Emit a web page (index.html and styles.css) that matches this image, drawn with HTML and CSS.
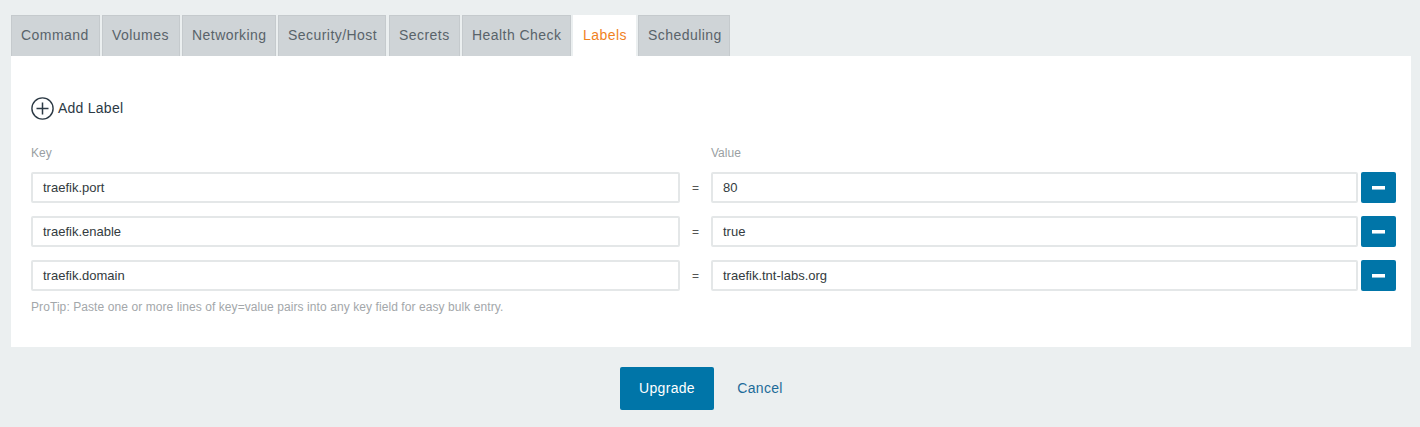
FILE: index.html
```html
<!DOCTYPE html>
<html>
<head>
<meta charset="utf-8">
<link rel="stylesheet" href="styles.css">
</head>
<body>
<div class="page">
  <div class="tabs">
    <div class="tab">Command</div>
    <div class="tab">Volumes</div>
    <div class="tab">Networking</div>
    <div class="tab">Security/Host</div>
    <div class="tab">Secrets</div>
    <div class="tab">Health Check</div>
    <div class="tab active">Labels</div>
    <div class="tab">Scheduling</div>
  </div>
  <div class="panel">
    <div class="add">
      <svg class="plus" width="23" height="23" viewBox="0 0 23 23"><circle cx="11.5" cy="11.5" r="10.6" fill="none" stroke="#2c3a45" stroke-width="1.4"/><path d="M11.5 5.5v12M5.5 11.5h12" stroke="#2c3a45" stroke-width="1.5"/></svg>
      <span>Add Label</span>
    </div>
    <div class="heads">
      <div class="col key">Key</div>
      <div class="eq"></div>
      <div class="col">Value</div>
      <div class="btnspace"></div>
    </div>
    <div class="row">
      <div class="input key">traefik.port</div>
      <div class="eq">=</div>
      <div class="input">80</div>
      <div class="minus"><span></span></div>
    </div>
    <div class="row">
      <div class="input key">traefik.enable</div>
      <div class="eq">=</div>
      <div class="input">true</div>
      <div class="minus"><span></span></div>
    </div>
    <div class="row">
      <div class="input key">traefik.domain</div>
      <div class="eq">=</div>
      <div class="input">traefik.tnt-labs.org</div>
      <div class="minus"><span></span></div>
    </div>
    <div class="tip">ProTip: Paste one or more lines of key=value pairs into any key field for easy bulk entry.</div>
  </div>
  <div class="actions">
    <div class="primary">Upgrade</div>
    <div class="cancel">Cancel</div>
  </div>
</div>
</body>
</html>
```
FILE: styles.css
```css
html, body {
  margin: 0;
  padding: 0;
  background: #ebeff0;
  font-family: "Liberation Sans", Arial, sans-serif;
}
.page {
  padding: 15px 9px 0 11px;
  height: 412px;
}
.tabs {
  display: flex;
  gap: 2px;
  height: 41px;
}
.tab {
  box-sizing: border-box;
  height: 41px;
  padding: 0 0 0 9px;
  white-space: nowrap;
  overflow: hidden;
  background: #cfd4d7;
  border: 1px solid #c5cacd;
  border-bottom: none;
  color: #59636a;
  font-size: 14px;
  letter-spacing: 0.45px;
  line-height: 38px;
}
.tab.active {
  background: #fff;
  border-color: #fff;
  color: #f0821e;
}
.tab:nth-child(1) { width: 89px; }
.tab:nth-child(2) { width: 78px; }
.tab:nth-child(3) { width: 94px; }
.tab:nth-child(4) { width: 108px; }
.tab:nth-child(5) { width: 71px; margin-left: 1px; }
.tab:nth-child(6) { width: 109px; }
.tab:nth-child(7) { width: 63px; }
.tab:nth-child(8) { width: 92px; }
.panel {
  background: #fff;
  width: 1400px;
  box-sizing: border-box;
  height: 291px;
  padding: 40px 15px 0 20px;
}
.add {
  display: flex;
  align-items: center;
  height: 24px;
  color: #2c3a45;
  font-size: 14px;
  letter-spacing: 0.25px;
}
.add .plus { margin-right: 4px; }
.heads {
  display: flex;
  margin-top: 26px;
  height: 26px;
  font-size: 12px;
  color: #9a9fa3;
}
.col { flex: 1; }
.col.key, .input.key { flex: 0 0 649px; }
.heads .eq { width: 31px; }
.btnspace { width: 38px; }
.row {
  display: flex;
  align-items: center;
  height: 31px;
  margin-bottom: 13px;
}
.input {
  flex: 1;
  box-sizing: border-box;
  height: 31px;
  border: 2px solid #e4e7e8;
  border-radius: 2px;
  padding: 0 10px;
  font-size: 13px;
  line-height: 27px;
  color: #333b40;
}
.row .eq {
  width: 31px;
  text-align: center;
  font-size: 12px;
  color: #555;
}
.minus {
  width: 35px;
  height: 31px;
  margin-left: 3px;
  background: #0075a8;
  border-radius: 2px;
  display: flex;
  align-items: center;
  justify-content: center;
}
.minus span {
  display: block;
  width: 13px;
  height: 3px;
  background: #fff;
  box-shadow: 0 1px 0 #8ebfd6;
}
.tip {
  margin-top: -4px;
  font-size: 12px;
  letter-spacing: 0.08px;
  color: #a3a7aa;
}
.actions {
  display: flex;
  justify-content: center;
  margin-top: 20px;
  padding-left: 4px;
}
.primary {
  width: 94px;
  height: 43px;
  background: #0075a8;
  border-radius: 2px;
  color: #fff;
  font-size: 14px;
  letter-spacing: 0.3px;
  line-height: 43px;
  text-align: center;
}
.cancel {
  width: 92px;
  height: 43px;
  line-height: 43px;
  text-align: center;
  color: #1d6b99;
  font-size: 14px;
  letter-spacing: 0.3px;
}
```
